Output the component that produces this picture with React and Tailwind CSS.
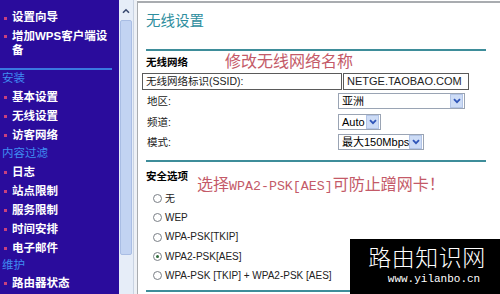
import React from 'react';

const cjk = '"Liberation Sans", "Noto Sans CJK SC", sans-serif';

const NavItem = ({ children, h = 'h-[19px]' }) => (
  <div className={`${h} flex items-center`}>
    <span className="w-[3px] h-[3px] bg-[#c8407e] ml-[4px] mr-[5px] shrink-0" />
    <span className="text-[11.5px] font-bold text-white leading-none">{children}</span>
  </div>
);

const NavSection = ({ children, h = 'h-[18px]' }) => (
  <div className={`${h} flex items-center pl-[2px] text-[11.5px] text-[#3f8cf2] leading-none`}>{children}</div>
);

const Chevron = () => (
  <svg width="8" height="6" viewBox="0 0 8 6">
    <path d="M1 1.2 L4 4.2 L7 1.2" fill="none" stroke="#2f55b8" strokeWidth="1.8" />
  </svg>
);

const Select = ({ value, w }) => (
  <div className={`${w} h-[16px] border border-[#9aa4b4] bg-white flex items-center justify-between`}>
    <span className="pl-[3px] text-[11px] text-black leading-none whitespace-nowrap">{value}</span>
    <span className="w-[13px] h-[14px] mr-[1px] bg-[#cddcf6] border border-[#b2c4e6] flex items-center justify-center shrink-0">
      <Chevron />
    </span>
  </div>
);

const Radio = ({ label, checked }) => (
  <div className="h-[19.3px] flex items-center pl-[7px]">
    <span className="w-[9px] h-[9px] rounded-full border border-[#7a7f86] bg-white flex items-center justify-center mr-[3px] shrink-0">
      {checked && <span className="w-[3px] h-[3px] rounded-full bg-[#2f6a3a]" />}
    </span>
    <span className="text-[10px] text-[#222] leading-none whitespace-nowrap">{label}</span>
  </div>
);

const FieldRow = ({ label, children, h = 'h-[20px]' }) => (
  <div className={`${h} flex items-center`}>
    <span className="w-[196px] pl-[5px] text-[10.5px] text-[#222] leading-none">{label}</span>
    {children}
  </div>
);

export default function App() {
  return (
    <div className="relative w-[500px] h-[294px] overflow-hidden flex bg-white" style={{ fontFamily: cjk }}>
      {/* left menu */}
      <div className="w-[119px] h-full bg-[#2a0c9c] pt-[9px] shrink-0">
        <NavItem h="h-[18px]">设置向导</NavItem>
        <div className="flex mt-[2px]">
          <span className="w-[3px] h-[3px] bg-[#c8407e] ml-[4px] mr-[5px] mt-[6px] shrink-0" />
          <span className="text-[11.5px] font-bold text-white leading-[14px]">
            增加WPS客户端设
            <br />备
          </span>
        </div>
        <div className="h-[2px] w-[112px] bg-[#3a78e0] mt-[11px]" />
        <NavSection>安装</NavSection>
        <NavItem>基本设置</NavItem>
        <NavItem>无线设置</NavItem>
        <NavItem>访客网络</NavItem>
        <NavSection>内容过滤</NavSection>
        <NavItem>日志</NavItem>
        <NavItem>站点限制</NavItem>
        <NavItem>服务限制</NavItem>
        <NavItem>时间安排</NavItem>
        <NavItem>电子邮件</NavItem>
        <NavSection h="h-[16px]">维护</NavSection>
        <NavItem>路由器状态</NavItem>
      </div>

      {/* scrollbar */}
      <div className="w-[15px] h-full bg-[#e6edf8] flex flex-col shrink-0 border-r border-[#c9d3e2]">
        <div className="h-[18px] mt-[2px] flex items-center justify-center">
          <svg width="8" height="6" viewBox="0 0 8 6">
            <path d="M1 4.8 L4 1.8 L7 4.8" fill="none" stroke="#3a4a70" strokeWidth="1.6" />
          </svg>
        </div>
        <div className="h-[235px] mx-[1px] bg-[#c2d3f2] border border-[#a9bde4] rounded-[2px]" />
      </div>

      <div className="w-[3px] h-full bg-[#eef1f6] shrink-0" />

      {/* content */}
      <div className="flex-1 h-full border-l border-t-2 border-[#a9acb0] mt-[1px] pl-[8px] pr-[14px]">
        <div className="h-[26px] flex items-end text-[14.5px] text-[#2e8e9e] leading-none pb-[1px]">无线设置</div>
        <div className="h-[2px] bg-[#3e8d9a] mt-[20px]" />
        <div className="h-[22px] flex items-center">
          <span className="w-[79px] text-[10.5px] font-bold text-black leading-none">无线网络</span>
          <span className="text-[16px] text-[#c45a68] leading-none">修改无线网络名称</span>
        </div>
        <div className="h-[17px] flex items-stretch -ml-[4px]">
          <div className="w-[200px] border border-[#5a5a5a] flex items-center pl-[3px] text-[10.5px] text-[#222] leading-none">
            无线网络标识(SSID):
          </div>
          <div className="w-[126px] border border-[#5a5a5a] flex items-center pl-[3px] text-[11px] text-[#222] leading-none ml-[1px]">
            NETGE.TAOBAO.COM
          </div>
        </div>
        <div className="-ml-[4px]">
          <FieldRow label="地区:" h="h-[22px]"><Select value="亚洲" w="w-[127px]" /></FieldRow>
          <FieldRow label="频道:"><Select value="Auto" w="w-[43px]" /></FieldRow>
          <FieldRow label="模式:"><Select value="最大150Mbps" w="w-[86px]" /></FieldRow>
        </div>
        <div className="h-[2px] bg-[#3e8d9a] mt-[8px]" />
        <div className="h-[19px] flex items-end">
          <span className="text-[10.5px] font-bold text-black leading-none">安全选项</span>
        </div>
        <div className="relative">
          <div className="absolute left-[51px] -top-[4px] text-[16px] text-[#c45a68] leading-none whitespace-nowrap">
            选择<span style={{ fontFamily: '"Liberation Mono", monospace' }} className="text-[13.3px]">WPA2-PSK[AES]</span>可防止蹭网卡！
          </div>
          <div className="pt-[8px]">
            <Radio label="无" />
            <Radio label="WEP" />
            <Radio label="WPA-PSK[TKIP]" />
            <Radio label="WPA2-PSK[AES]" checked />
            <Radio label="WPA-PSK [TKIP] + WPA2-PSK [AES]" />
          </div>
          <div className="h-[2px] bg-[#3e8d9a] mt-[5px]" />
        </div>
      </div>

      {/* watermark */}
      <div className="absolute left-[350px] top-[239px] w-[150px] h-[55px] bg-black flex flex-col items-center pt-[6px]">
        <span className="text-[23px] font-light text-white leading-none tracking-[0.5px] pl-[4px]" style={{ fontFamily: '"Noto Sans CJK SC", sans-serif' }}>路由知识网</span>
        <span className="text-[11px] text-white leading-none mt-[6px] pl-[18px]" style={{ fontFamily: '"Liberation Mono", monospace' }}>www.yilanbo.cn</span>
      </div>
    </div>
  );
}
